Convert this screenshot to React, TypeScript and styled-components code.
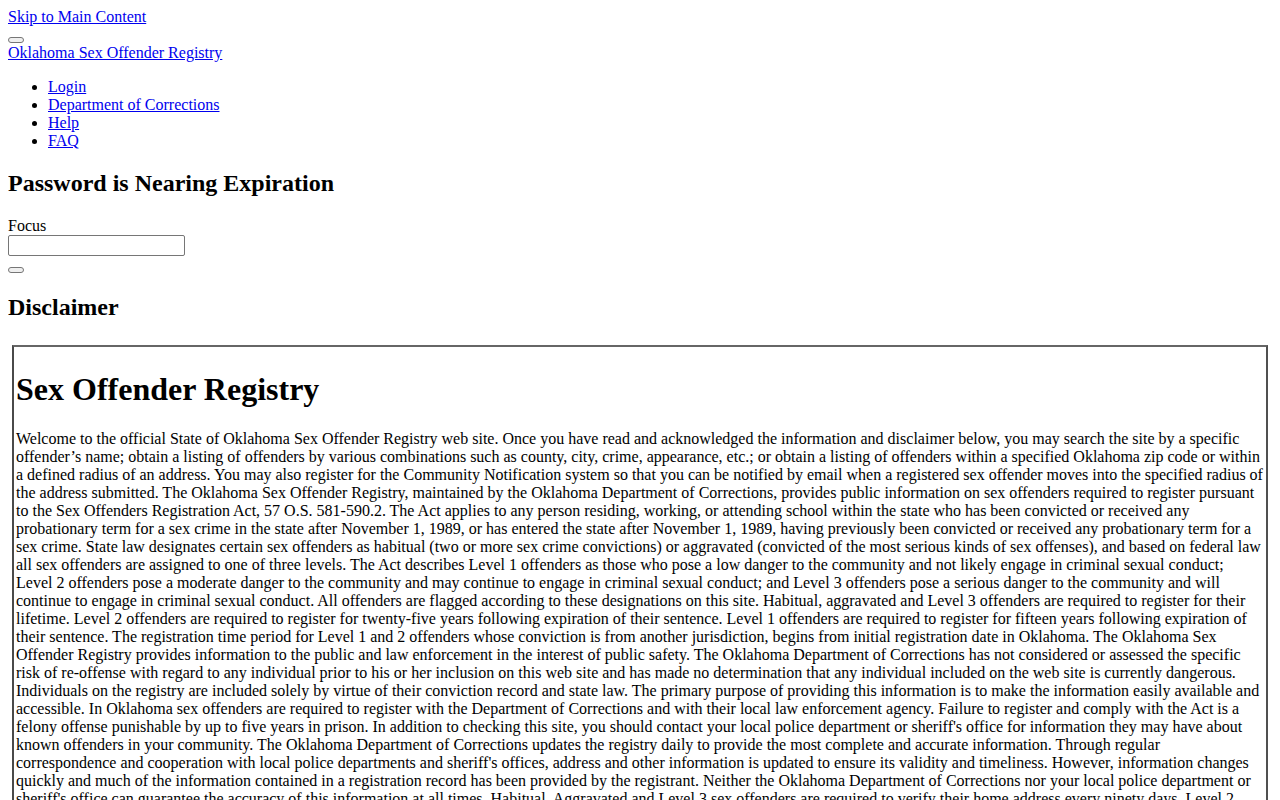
import React from "react";
import styled, { createGlobalStyle } from "styled-components";

const GlobalStyle = createGlobalStyle`
  body {
    margin: 8px;
    background: #fff;
    color: #000;
    font-family: "Liberation Serif", "Times New Roman", serif;
    font-size: 16px;
    line-height: 18px;
  }
`;

const TextLink = styled.a`
  color: #0000ee;
  text-decoration: underline;
`;

const SkipLink = styled(TextLink)`
  display: block;
`;

const Header = styled.header`
  display: block;
`;

const Toggler = styled.button`
  display: block;
  width: 16px;
  height: 6px;
  margin: 11px 0 1px;
  padding: 0;
  border: 1px solid #767676;
  border-radius: 3px;
  background: #efefef;
`;

const BrandLink = styled(TextLink)`
  display: block;
`;

const NavList = styled.ul`
  margin: 16px 0;
  padding-left: 40px;
  list-style: disc;
`;

const SectionTitle = styled.h2`
  font-size: 24px;
  line-height: 27px;
  font-weight: bold;
  margin: 20px 0;
`;

const FieldLabel = styled.label`
  display: block;
  margin-top: 1px;
`;

const FocusInput = styled.input`
  display: block;
  box-sizing: border-box;
  width: 177px;
  height: 21px;
  margin: 0;
  padding: 1px 2px;
  border: 1px solid #767676;
  border-radius: 2px;
  font-family: "Liberation Sans", Arial, sans-serif;
  font-size: 13.33px;
`;

const SubmitButton = styled(Toggler)`
  margin: 11px 0 21px;
`;

const FrameWrap = styled.div`
  padding: 4px;
`;

const RegistryBox = styled.div`
  border: 2px solid #505050;
  border-top-color: #666;
  border-left-color: #4a4a4a;
  padding: 2px;
`;

const RegistryTitle = styled.h1`
  font-size: 32px;
  line-height: 36px;
  font-weight: bold;
  margin: 22px 0 23px;
`;

const Body = styled.p`
  margin: 0 0 16px;
`;

const disclaimer =
  "Welcome to the official State of Oklahoma Sex Offender Registry web site. Once you have read and acknowledged the information and disclaimer below, you may search the site by a specific offender\u2019s name; obtain a listing of offenders by various combinations such as county, city, crime, appearance, etc.; or obtain a listing of offenders within a specified Oklahoma zip code or within a defined radius of an address. You may also register for the Community Notification system so that you can be notified by email when a registered sex offender moves into the specified radius of the address submitted. The Oklahoma Sex Offender Registry, maintained by the Oklahoma Department of Corrections, provides public information on sex offenders required to register pursuant to the Sex Offenders Registration Act, 57 O.S. 581-590.2. The Act applies to any person residing, working, or attending school within the state who has been convicted or received any probationary term for a sex crime in the state after November 1, 1989, or has entered the state after November 1, 1989, having previously been convicted or received any probationary term for a sex crime. State law designates certain sex offenders as habitual (two or more sex crime convictions) or aggravated (convicted of the most serious kinds of sex offenses), and based on federal law all sex offenders are assigned to one of three levels. The Act describes Level 1 offenders as those who pose a low danger to the community and not likely engage in criminal sexual conduct; Level 2 offenders pose a moderate danger to the community and may continue to engage in criminal sexual conduct; and Level 3 offenders pose a serious danger to the community and will continue to engage in criminal sexual conduct. All offenders are flagged according to these designations on this site. Habitual, aggravated and Level 3 offenders are required to register for their lifetime. Level 2 offenders are required to register for twenty-five years following expiration of their sentence. Level 1 offenders are required to register for fifteen years following expiration of their sentence. The registration time period for Level 1 and 2 offenders whose conviction is from another jurisdiction, begins from initial registration date in Oklahoma. The Oklahoma Sex Offender Registry provides information to the public and law enforcement in the interest of public safety. The Oklahoma Department of Corrections has not considered or assessed the specific risk of re-offense with regard to any individual prior to his or her inclusion on this web site and has made no determination that any individual included on the web site is currently dangerous. Individuals on the registry are included solely by virtue of their conviction record and state law. The primary purpose of providing this information is to make the information easily available and accessible. In Oklahoma sex offenders are required to register with the Department of Corrections and with their local law enforcement agency. Failure to register and comply with the Act is a felony offense punishable by up to five years in prison. In addition to checking this site, you should contact your local police department or sheriff's office for information they may have about known offenders in your community. The Oklahoma Department of Corrections updates the registry daily to provide the most complete and accurate information. Through regular correspondence and cooperation with local police departments and sheriff's offices, address and other information is updated to ensure its validity and timeliness. However, information changes quickly and much of the information contained in a registration record has been provided by the registrant. Neither the Oklahoma Department of Corrections nor your local police department or sheriff's office can guarantee the accuracy of this information at all times. Habitual, Aggravated and Level 3 sex offenders are required to verify their home address every ninety days. Level 2 offenders are required to verify their home address every six months, and Level 1 offenders are required to verify their home address once a year.";

const navItems = ["Login", "Department of Corrections", "Help", "FAQ"];

const App = () => {
  return (
    <>
      <GlobalStyle />
      <SkipLink href="#main">Skip to Main Content</SkipLink>
      <Header>
        <Toggler type="button" aria-label="Toggle navigation" />
        <BrandLink href="#">Oklahoma Sex Offender Registry</BrandLink>
        <NavList>
          {navItems.map((item) => (
            <li key={item}>
              <TextLink href="#">{item}</TextLink>
            </li>
          ))}
        </NavList>
      </Header>
      <main id="main">
        <SectionTitle>Password is Nearing Expiration</SectionTitle>
        <FieldLabel htmlFor="focus">Focus</FieldLabel>
        <FocusInput id="focus" type="text" />
        <SubmitButton type="button" aria-label="Submit" />
        <SectionTitle>Disclaimer</SectionTitle>
        <FrameWrap>
          <RegistryBox>
            <RegistryTitle>Sex Offender Registry</RegistryTitle>
            <Body>{disclaimer}</Body>
          </RegistryBox>
        </FrameWrap>
      </main>
    </>
  );
};

export default App;
